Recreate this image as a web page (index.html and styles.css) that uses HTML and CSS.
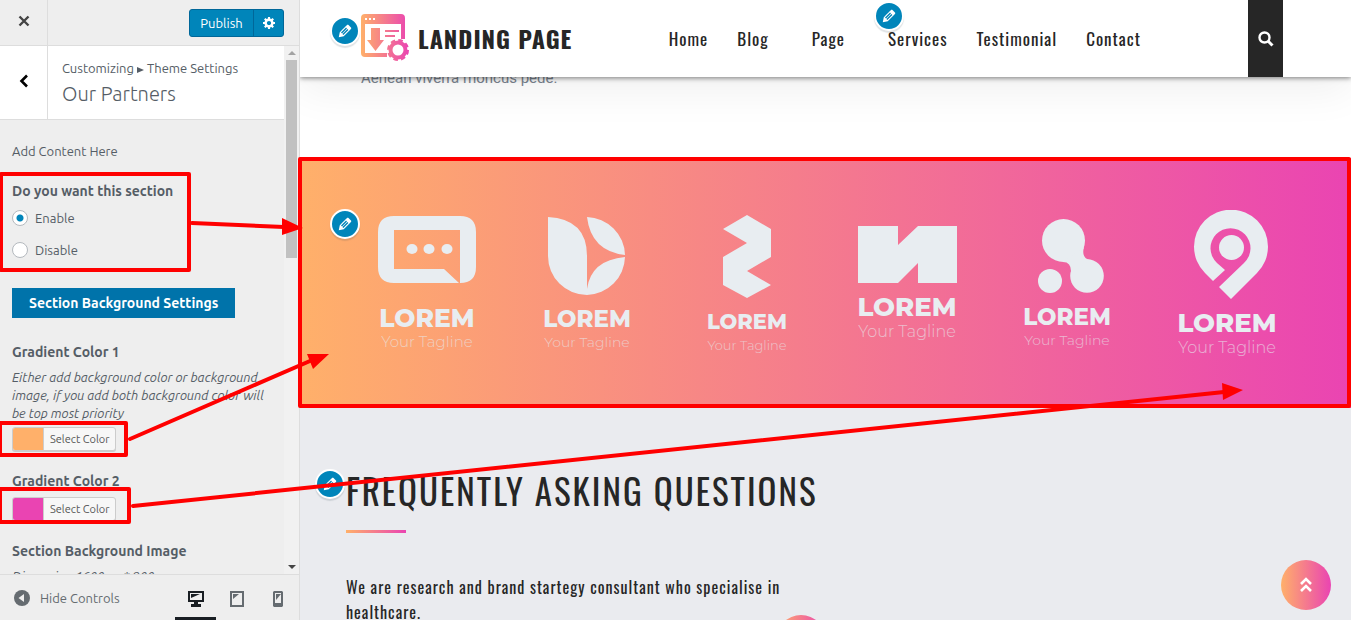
FILE: index.html
```html
<!DOCTYPE html>
<html lang="en">
<head>
    <meta charset="UTF-8">
    <meta name="viewport" content="width=device-width, initial-scale=1.0">
    <title>Customize: Landing Page</title>
    <link rel="stylesheet" href="styles.css">
</head>
<body>
    <!-- Shared icons -->
    <svg class="icon-defs" width="0" height="0" aria-hidden="true">
        <defs>
            <symbol id="pencil" viewBox="0 0 20 20">
                <path d="M13.89 3.39l2.71 2.72c.46.46.42 1.24.03 1.64l-8.01 8.02-5.56 1.16 1.16-5.58s7.6-7.63 7.99-8.03c.39-.39 1.22-.39 1.68.07zm-2.73 2.79l-5.59 5.61 1.11 1.11 5.54-5.65zm-2.97 8.23l5.58-5.6-1.07-1.08-5.59 5.6z"/>
            </symbol>
            <linearGradient id="brand" gradientUnits="userSpaceOnUse" x1="0" y1="0" x2="48" y2="0">
                <stop offset="0" stop-color="#ffb06a"/>
                <stop offset="1" stop-color="#ea44b2"/>
            </linearGradient>
        </defs>
    </svg>

    <aside class="sidebar">
        <div class="sidebar-header">
            <button class="close-button" aria-label="Close">
                <svg width="12" height="12" viewBox="0 0 12 12"><path d="M1.500 1.500L10.500 10.500M10.500 1.500L1.500 10.500" stroke="#444" stroke-width="2.400" fill="none"/></svg>
            </button>
            <div class="publish-group">
                <button class="publish-button">Publish</button>
                <button class="gear-button" aria-label="Publish settings">
                    <svg width="12" height="12" viewBox="1 2 17 17"><path fill="#fff" d="M18 12h-2.180c-.17.7-.44 1.350-.81 1.930l1.540 1.540-2.100 2.100-1.540-1.540c-.58.36-1.230.63-1.910.79V19H8v-2.180c-.68-.16-1.330-.43-1.910-.79l-1.540 1.540-2.120-2.120 1.540-1.540c-.36-.58-.63-1.230-.79-1.910H1V9.030h2.170c.16-.7.44-1.350.8-1.940L2.430 5.550l2.100-2.100 1.540 1.540c.58-.37 1.240-.64 1.930-.81V2h3v2.180c.68.16 1.330.43 1.910.79l1.540-1.540 2.120 2.120-1.540 1.540c.36.59.64 1.240.8 1.940H18V12zm-8.500 1.500c1.660 0 3-1.340 3-3s-1.340-3-3-3-3 1.340-3 3 1.340 3 3 3z"/></svg>
                </button>
            </div>
        </div>

        <div class="sidebar-body">
            <div class="panel">
                <div class="panel-title">
                    <button class="back-button" aria-label="Back">
                        <svg width="10" height="14" viewBox="0 0 10 14"><path d="M8 1.500L2.500 7L8 12.500" stroke="#000" stroke-width="2.600" fill="none"/></svg>
                    </button>
                    <div class="panel-heading">
                        <span class="breadcrumb">Customizing <svg width="7" height="6" viewBox="0 0 7 6"><path d="M0 0L7 3L0 6z" fill="#555d66"/></svg> Theme Settings</span>
                        <h1>Our Partners</h1>
                    </div>
                </div>

                <form class="controls">
                    <p class="note">Add Content Here</p>
                    <fieldset class="radios">
                        <legend>Do you want this section</legend>
                        <label><input type="radio" name="section" value="enable" checked>Enable</label>
                        <label><input type="radio" name="section" value="disable">Disable</label>
                    </fieldset>
                    <h2 class="settings-title">Section Background Settings</h2>
                    <div class="control">
                        <h3>Gradient Color 1</h3>
                        <p class="description">Either add background color or background image, if you add both background color will be top most priority</p>
                        <button type="button" class="color-button"><span class="swatch orange"></span><span>Select Color</span></button>
                    </div>
                    <div class="control">
                        <h3>Gradient Color 2</h3>
                        <button type="button" class="color-button"><span class="swatch pink"></span><span>Select Color</span></button>
                    </div>
                    <div class="control">
                        <h3>Section Background Image</h3>
                        <p class="description">Dimension 1600 px * 900</p>
                    </div>
                </form>
            </div>
            <div class="scrollbar">
                <svg width="8" height="14" viewBox="0 0 8 14"><path d="M0 9L4 5L8 9z" fill="#a3a3a3"/></svg>
                <div class="thumb"></div>
                <svg class="down" width="8" height="14" viewBox="0 0 8 14"><path d="M0 5L4 9L8 5z" fill="#444"/></svg>
            </div>
        </div>

        <div class="sidebar-footer">
            <button class="collapse">
                <svg width="16" height="16" viewBox="0 0 16 16"><circle cx="8" cy="8" r="8" fill="#656b70"/><path d="M10 4v8L4.500 8z" fill="#eee"/></svg>
                Hide Controls
            </button>
            <div class="devices">
                <button class="active" aria-label="Desktop">
                    <svg width="16" height="16" viewBox="0 0 16 16"><path d="M0 0h16v11h-6v2h3v3H3v-3h3v-2H0zM2 2v7h12V2z" fill="#191e23" fill-rule="evenodd"/><path d="M3 3h9L3 7z" fill="#191e23"/></svg>
                </button>
                <button aria-label="Tablet">
                    <svg width="14" height="16" viewBox="0 0 14 16"><path d="M0 0h14v16H0zM2 2v12h10V2z" fill="#656b70" fill-rule="evenodd"/><path d="M3 3h6L3 8z" fill="#656b70"/></svg>
                </button>
                <button aria-label="Mobile">
                    <svg width="10" height="16" viewBox="0 0 10 16"><path d="M1 0h8l1 1v14l-1 1H1l-1-1V1zM2 2v10h6V2z" fill="#656b70" fill-rule="evenodd"/><path d="M3 3h5L3 9z" fill="#656b70"/></svg>
                </button>
            </div>
        </div>
    </aside>

    <main class="preview">
        <header class="site-header">
            <button class="edit edit-logo" aria-label="Edit logo"><svg><use href="#pencil"/></svg></button>
            <a class="logo" href="#">
                <svg width="48" height="48" viewBox="0 0 48 48">
                    <path d="M4 0h36q4 0 4 4v21h-4V10H4v29h22v4H4q-4 0-4-4V4q0-4 4-4z" fill="url(#brand)"/>
                    <path d="M10 14h9v12h4L14.500 37L6 26h4z" fill="url(#brand)"/>
                    <path d="M24 17h14M24 22h10" stroke="url(#brand)" stroke-width="2"/>
                    <path d="M4 5h2M8 5h2M12 5h2" stroke="#fff" stroke-width="2"/>
                    <circle cx="37" cy="36" r="7.500" fill="#fff" stroke="url(#brand)" stroke-width="4"/>
                    <circle cx="37" cy="36" r="9.500" fill="none" stroke="url(#brand)" stroke-width="3" stroke-dasharray="4.400 3.060"/>
                </svg>
                <span>LANDING PAGE</span>
            </a>
            <nav class="menu">
                <a href="#">Home</a>
                <a href="#" class="has-children">Blog</a>
                <a href="#" class="has-children">Page</a>
                <a href="#">Services</a>
                <a href="#">Testimonial</a>
                <a href="#">Contact</a>
                <button class="edit edit-menu" aria-label="Edit menu"><svg><use href="#pencil"/></svg></button>
            </nav>
            <button class="search" aria-label="Search">
                <svg width="16" height="16" viewBox="0 0 16 16"><circle cx="6.500" cy="6.500" r="5" fill="none" stroke="#fff" stroke-width="2.400"/><path d="M10 10L14.500 14.500" stroke="#fff" stroke-width="3"/></svg>
            </button>
        </header>

        <section class="intro">
            <p>Aenean viverra rhoncus pede.</p>
        </section>

        <section class="partners">
            <button class="edit edit-partners" aria-label="Edit partners"><svg><use href="#pencil"/></svg></button>
            <div class="partner-list">
                <div class="partner medium">
                    <svg width="98" height="78" viewBox="0 0 98 78"><path fill-rule="evenodd" d="M16 0H82Q98 0 98 16V51Q98 67 82 67V14H16V53H66L81 67H16Q0 67 0 51V16Q0 0 16 0z"/><ellipse cx="34" cy="33" rx="5.500" ry="5"/><ellipse cx="51" cy="33" rx="5.500" ry="5"/><ellipse cx="69" cy="33" rx="5.500" ry="5"/></svg>
                    <strong>LOREM</strong><span>Your Tagline</span>
                </div>
                <div class="partner">
                    <svg width="78" height="78" viewBox="0 0 78 78"><path d="M0 0Q39 2 39 39V78A39 39 0 0 1 0 39zM39 0A39 39 0 0 1 77 38Q43 34 39 0zM77 40A39 39 0 0 1 39 78V72Q43 43 77 40z"/></svg>
                    <strong>LOREM</strong><span>Your Tagline</span>
                </div>
                <div class="partner small">
                    <svg width="48" height="83" viewBox="0 0 48 83"><path d="M24 0L48 14V42L24 56L48 70L24 83L0 70V42L24 28L0 14z"/></svg>
                    <strong>LOREM</strong><span>Your Tagline</span>
                </div>
                <div class="partner large">
                    <svg width="99" height="57" viewBox="0 0 99 57"><path d="M0 0H40V19L60 0H99V57H60V37L40 57H0z"/></svg>
                    <strong>LOREM</strong><span>Your Tagline</span>
                </div>
                <div class="partner">
                    <svg width="74" height="74" viewBox="-8 0 74 74"><circle cx="25.500" cy="21.500" r="21.500"/><circle cx="49" cy="57" r="16.800"/><circle cx="12" cy="62" r="12"/><path d="M46 28Q43 39 52 41L33 55Q34 43 25 43z"/></svg>
                    <strong>LOREM</strong><span>Your Tagline</span>
                </div>
                <div class="partner large">
                    <svg width="82" height="89" viewBox="-8 0 82 89"><path d="M19 71L11 63A37 37 0 1 1 63 63L37 89L25 77L50 53A20 20 0 1 0 23 53L31 60z"/><circle cx="37.500" cy="37.500" r="12.500"/></svg>
                    <strong>LOREM</strong><span>Your Tagline</span>
                </div>
            </div>
        </section>

        <section class="faq">
            <button class="edit edit-faq" aria-label="Edit questions"><svg><use href="#pencil"/></svg></button>
            <h2>FREQUENTLY ASKING QUESTIONS</h2>
            <div class="divider"></div>
            <p>We are research and brand startegy consultant who specialise in healthcare.</p>
            <div class="bubble"></div>
        </section>

        <button class="scroll-top" aria-label="Back to top">
            <svg width="12" height="16" viewBox="0 0 12 16"><path d="M1 7L6 2L11 7M1 14L6 9L11 14" fill="none" stroke="#fff" stroke-width="2.600"/></svg>
        </button>
    </main>

    <!-- Red boxes and arrows over the page -->
    <svg class="annotations" width="1351" height="620" viewBox="0 0 1351 620" aria-hidden="true">
        <g fill="none" stroke="#f00" stroke-width="4" stroke-linejoin="round">
            <rect x="1" y="174" width="188" height="96"/>
            <rect x="0" y="423" width="126" height="32"/>
            <rect x="0" y="489" width="129" height="33"/>
            <rect x="300" y="159" width="1049" height="247"/>
            <path d="M192 223L284 227M130 439L310 361M133 506L1224 392" stroke-linecap="round"/>
        </g>
        <path fill="#f00" d="M282 218L303 228L282 235zM307 354L329 354L313 369zM1222 383L1243 390L1223 400z"/>
    </svg>
</body>
</html>
```
FILE: styles.css
```css
* {
    box-sizing: border-box;
}

body {
    margin: 0;
    height: 100vh;
    display: flex;
    position: relative;
    overflow: hidden;
    font-family: Ubuntu, "Noto Sans", sans-serif;
    font-size: 13px;
    color: #555d66;
}

h1, h2, h3, p {
    margin: 0;
}

button {
    font-family: inherit;
    padding: 0;
    border: none;
    background: none;
    cursor: pointer;
}

svg {
    flex-shrink: 0;
}

.icon-defs {
    position: absolute;
}

/* Sidebar */
.sidebar {
    width: 300px;
    flex-shrink: 0;
    display: flex;
    flex-direction: column;
    background-color: #eee;
    border-right: 1px solid #ddd;
}

.sidebar-header {
    height: 46px;
    display: flex;
    justify-content: space-between;
    align-items: center;
    padding-right: 15px;
    border-bottom: 1px solid #ddd;
}

.close-button, .back-button {
    width: 48px;
    align-self: stretch;
    border-right: 1px solid #ddd;
}

.publish-group {
    display: flex;
    height: 28px;
    border: 1px solid #006799;
    border-radius: 3px;
    background-color: #0085ba;
}

.publish-button {
    width: 64px;
    font-size: 13px;
    color: #fff;
    border-right: 1px solid #006799;
}

.gear-button {
    width: 29px;
    display: flex;
    align-items: center;
    justify-content: center;
}

.sidebar-body {
    flex: 1;
    min-height: 0;
    display: flex;
}

.panel {
    flex: 1;
    overflow: hidden;
}

.panel-title {
    display: flex;
    height: 74px;
    background-color: #fff;
    border-bottom: 1px solid #ddd;
}

.panel-heading {
    padding: 12px 14px;
}

.breadcrumb {
    display: block;
    line-height: 20px;
}

.panel-heading h1 {
    font-size: 20px;
    font-weight: 300;
    line-height: 32px;
}

.controls {
    padding: 20px 12px;
}

.note {
    line-height: 22px;
}

.radios {
    margin: 18px 0 0;
    padding: 0;
    border: none;
}

.radios legend, .control h3 {
    padding: 0;
    font-size: 14px;
    font-weight: 700;
    line-height: 22px;
}

.radios label {
    display: flex;
    align-items: center;
    gap: 7px;
    height: 32px;
}

.radios input {
    appearance: none;
    width: 16px;
    height: 16px;
    margin: 0;
    border: 1px solid #b4b9be;
    border-radius: 50%;
    background-color: #fff;
}

.radios input:checked {
    background-image: radial-gradient(circle, #0085ba 3px, #fff 4px);
}

.settings-title {
    display: inline-block;
    margin: 22px 0 23px;
    padding: 0 17px;
    font-size: 14px;
    font-weight: 700;
    line-height: 30px;
    color: #fff;
    background-color: #0073aa;
}

.control {
    margin-bottom: 19px;
}

.description {
    margin: 5px 0;
    font-style: italic;
    line-height: 18px;
}

.color-button {
    display: flex;
    height: 24px;
    margin-top: 5px;
    border: 1px solid #ccc;
    border-radius: 3px;
    background-color: #f7f7f7;
    box-shadow: 0 1px 0 #ccc;
    font-size: 11px;
    line-height: 22px;
    color: #555;
    overflow: hidden;
}

.color-button span + span {
    padding: 0 6px;
    border-left: 1px solid #ccc;
}

.swatch {
    width: 30px;
}

.orange {
    background-color: #ffb06a;
}

.pink {
    background-color: #ea44b2;
}

.scrollbar {
    width: 15px;
    display: flex;
    flex-direction: column;
    align-items: center;
    background-color: #f1f1f1;
}

.thumb {
    width: 11px;
    height: 198px;
    background-color: #c1c1c1;
}

.down {
    margin-top: auto;
}

.sidebar-footer {
    height: 46px;
    display: flex;
    justify-content: space-between;
    padding: 0 1px 0 14px;
    border-top: 1px solid #ddd;
}

.collapse {
    display: flex;
    align-items: center;
    gap: 10px;
    font-size: 13px;
    color: #656b70;
}

.devices {
    display: flex;
}

.devices button {
    width: 41px;
    display: flex;
    align-items: center;
    justify-content: center;
    padding-top: 5px;
    border-bottom: 3px solid transparent;
}

.devices .active {
    border-bottom-color: #191e23;
}

/* Preview */
.preview {
    flex: 1;
    position: relative;
    display: flex;
    flex-direction: column;
    overflow: hidden;
    background-color: #fff;
    color: #262626;
}

.site-header {
    position: absolute;
    top: 0;
    left: 0;
    right: 0;
    z-index: 2;
    height: 77px;
    display: flex;
    align-items: center;
    padding: 0 68px 0 61px;
    background-color: #fff;
    box-shadow: 0 1px 5px rgba(0, 0, 0, 0.5), 0 15px 40px rgba(0, 0, 0, 0.06);
}

.logo, .menu, .faq {
    font-family: Oswald, sans-serif;
}

.logo {
    display: flex;
    align-items: center;
    gap: 9px;
    color: #262626;
    font-size: 24px;
    font-weight: 700;
    letter-spacing: 1px;
    line-height: 32px;
    padding-bottom: 2px;
    text-decoration: none;
    white-space: nowrap;
}

.menu {
    position: relative;
    display: flex;
    gap: 29px;
    margin-left: auto;
    margin-right: 107px;
}

.menu a {
    color: #262626;
    font-size: 17px;
    letter-spacing: 1px;
    text-decoration: none;
}

.has-children {
    padding-right: 14px;
}

.search {
    width: 35px;
    align-self: stretch;
    display: flex;
    align-items: center;
    justify-content: center;
    background-color: #262626;
}

.edit {
    position: absolute;
    z-index: 3;
    width: 30px;
    height: 30px;
    display: flex;
    align-items: center;
    justify-content: center;
    border: 2px solid #fff;
    border-radius: 50%;
    background-color: #0085ba;
    box-shadow: 0 2px 1px rgba(46, 68, 83, 0.15);
}

.edit svg {
    width: 18px;
    height: 18px;
    fill: #fff;
}

.edit-logo {
    left: 30px;
    top: 16px;
}

.edit-menu {
    left: 205px;
    top: -25px;
}

.edit-partners {
    left: 30px;
    top: 51px;
}

.edit-faq {
    left: 15px;
    top: 61px;
}

.intro {
    flex-shrink: 0;
    height: 158px;
    padding: 66px 61px 0;
    font-family: Roboto, sans-serif;
    font-size: 15px;
    line-height: 24px;
    color: #7a8490;
}

.partners {
    position: relative;
    flex-shrink: 0;
    height: 250px;
    display: flex;
    align-items: center;
    justify-content: center;
    padding: 2px 0 0 3px;
    background-image: linear-gradient(to right, #ffb06a, #ea44b2);
}

.partner-list {
    width: 960px;
    display: grid;
    grid-template-columns: repeat(6, 1fr);
    align-items: center;
}

.partner {
    display: flex;
    flex-direction: column;
    align-items: center;
    font-family: Montserrat, sans-serif;
    font-size: 14px;
    line-height: 18px;
    color: #e8edf1;
}

.partner svg {
    fill: #e8edf1;
    margin-bottom: 10px;
}

.partner strong {
    font-size: 23px;
    font-weight: 800;
    line-height: 28px;
}

.partner span {
    font-weight: 300;
    opacity: 0.6;
}

.partner.small {
    font-size: 13px;
}

.partner.small strong {
    font-size: 21px;
}

.partner.medium {
    font-size: 15px;
    line-height: 20px;
}

.partner.medium strong {
    font-size: 25px;
}

.partner.large {
    font-size: 16px;
    line-height: 22px;
}

.partner.large strong {
    font-size: 26px;
}

.faq {
    position: relative;
    flex: 1;
    padding: 57px 46px 0;
    background-color: #eaebef;
}

.faq h2 {
    font-size: 35px;
    font-weight: 400;
    letter-spacing: 2px;
    line-height: 50px;
    white-space: nowrap;
}

.divider {
    width: 60px;
    height: 3px;
    margin: 15px 0 42px;
    background-image: linear-gradient(to right, #ffb06a, #ea44b2);
}

.faq p {
    max-width: 460px;
    font-size: 16px;
    letter-spacing: 1px;
    line-height: 25px;
}

.bubble {
    position: absolute;
    left: 476px;
    top: 207px;
    width: 50px;
    height: 50px;
    border-radius: 50%;
    background-image: linear-gradient(to right, #ffb06a, #ea44b2);
}

.scroll-top {
    position: absolute;
    right: 20px;
    bottom: 10px;
    width: 50px;
    height: 50px;
    display: flex;
    align-items: center;
    justify-content: center;
    border-radius: 50%;
    background-image: linear-gradient(to right, #ffb06a, #ea44b2);
}

.annotations {
    position: absolute;
    left: 0;
    top: 0;
    z-index: 5;
    pointer-events: none;
}
```
